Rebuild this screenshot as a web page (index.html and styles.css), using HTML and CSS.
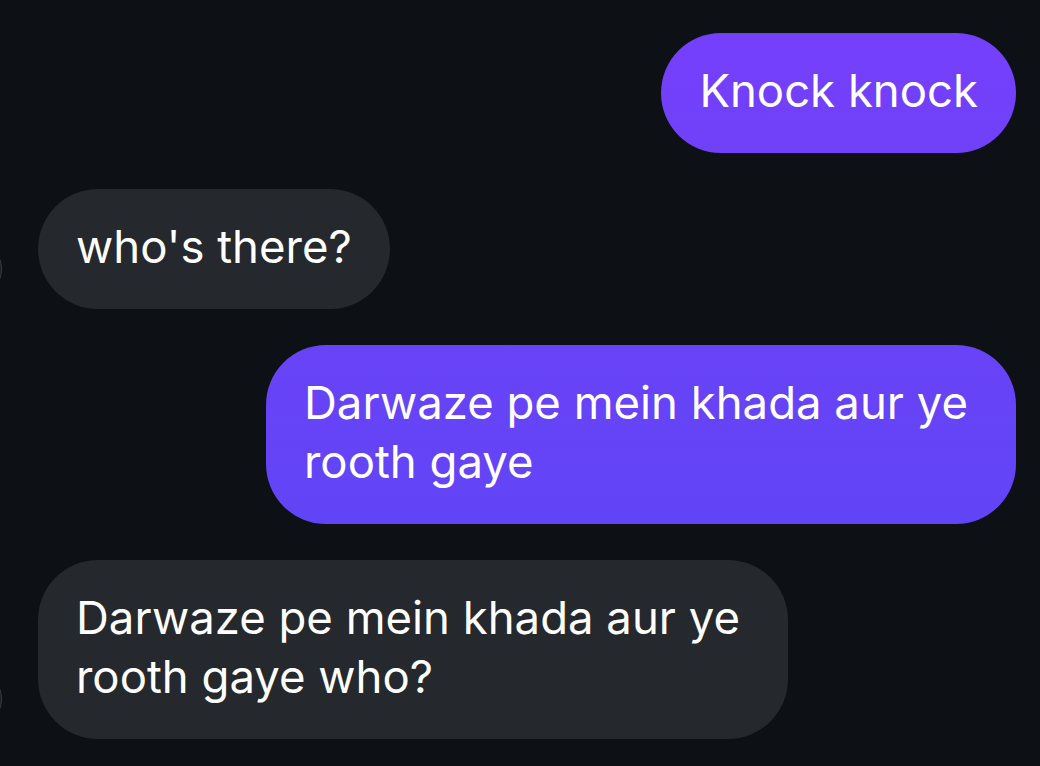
FILE: index.html
```html
<!DOCTYPE html>
<html lang="en">
<head>
    <meta charset="UTF-8">
    <meta name="viewport" content="width=device-width, initial-scale=1.0">
    <title>Chat</title>
    <link rel="stylesheet" href="styles.css">
</head>
<body>
    <div class="thread">
        <div class="msg sent">
            <div class="bubble">Knock knock</div>
        </div>
        <div class="msg received">
            <div class="avatar"></div>
            <div class="bubble">who's there?</div>
        </div>
        <div class="msg sent">
            <div class="bubble">Darwaze pe mein khada aur ye rooth gaye</div>
        </div>
        <div class="msg received">
            <div class="avatar"></div>
            <div class="bubble">Darwaze pe mein khada aur ye rooth gaye who?</div>
        </div>
    </div>
</body>
</html>
```

FILE: styles.css
```css
* {
    padding: 0;
    margin: 0;
    box-sizing: border-box;
}

body {
    color: #fff;
    background: #0d1014;
    font-family: 'Inter', 'Noto Sans', sans-serif;
    overflow: hidden;
}

.thread {
    display: flex;
    flex-direction: column;
    gap: 36px;
    padding: 33px 24px 0 0;
}

.msg {
    display: flex;
    align-items: flex-end;
}

.sent {
    justify-content: flex-end;
}

.avatar {
    width: 60px;
    height: 60px;
    border-radius: 50%;
    background: #1c1f23;
    border: 1px solid #3a3d41;
    margin-left: -58px;
    margin-right: 36px;
    margin-bottom: 10px;
    flex-shrink: 0;
}

.bubble {
    max-width: 750px;
    padding: 28px 38px 33px;
    font-size: 45.5px;
    line-height: 59px;
    border-radius: 60px;
}

.sent .bubble {
    background: linear-gradient(180deg, #763ffb 0%, #5847f4 100%) fixed;
}

.received .bubble {
    background: #25282c;
}
```
